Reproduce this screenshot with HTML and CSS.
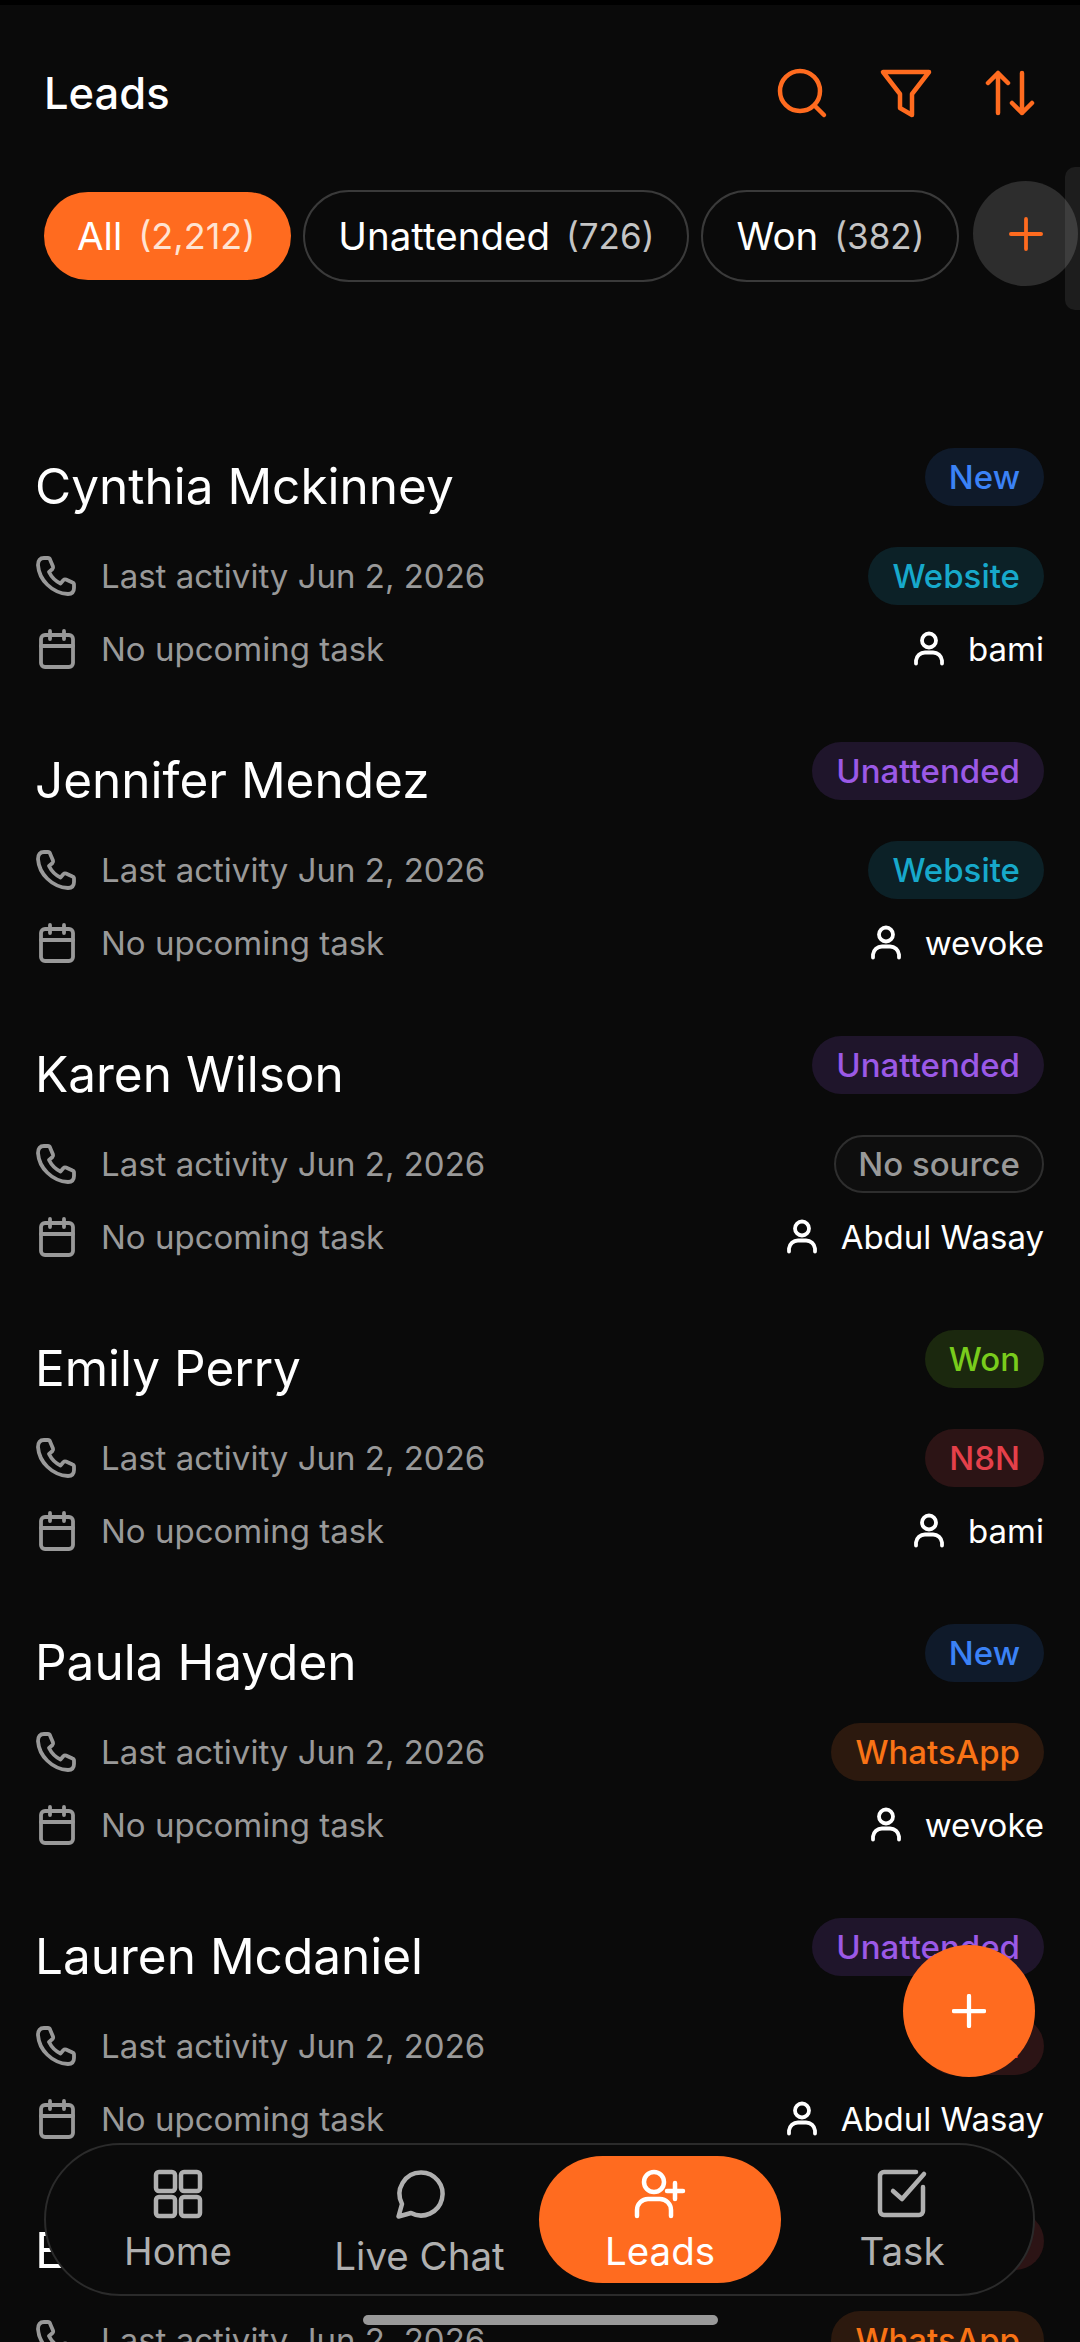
FILE: index.html
```html
<!DOCTYPE html>
<html lang="en">
<head>
    <meta charset="UTF-8">
    <meta name="viewport" content="width=device-width, initial-scale=1.0">
    <title>Leads</title>
    <link rel="stylesheet" href="styles.css">
</head>
<body>
    <svg width="0" height="0" class="defs">
        <symbol id="i-phone" viewBox="0 0 40 40"><path d="M8 2 L12 2 Q13.500 2 14 3.500 L17 10.500 Q17.500 12 16.500 13 L13 16 Q17 24 24.500 27.500 L27.500 24 Q28.500 23 30 23.500 L36.500 26.500 Q38 27 38 28.500 L38 32 Q38 38 32 38 C16 37 3 24 2 9 Q2 2 8 2 Z"/></symbol>
        <symbol id="i-cal" viewBox="0 0 40 40"><rect x="5" y="6" width="32" height="32" rx="4"/><path d="M5 17H37M14 2V10M28 2V10"/></symbol>
        <symbol id="i-user" viewBox="0 0 30 34"><circle cx="15" cy="9" r="7"/><path d="M2 32V29A9 9 0 0 1 11 21H19A9 9 0 0 1 28 29V32"/></symbol>
    </svg>

    <div class="statusbar"></div>

    <header class="topbar">
        <h1>Leads</h1>
        <div class="top-icons">
            <svg viewBox="0 0 48 48"><circle cx="22" cy="22" r="20"/><path d="M37 37L46 46"/></svg>
            <svg viewBox="0 0 48 48"><path d="M1 3H47L30 25V46L18 39V25Z"/></svg>
            <svg viewBox="0 0 48 48"><path d="M12 44V4M2 14L12 4L22 14M36 4V44M26 34L36 44L46 34"/></svg>
        </div>
    </header>

    <nav class="chips">
        <div class="chip active">All <span>(2,212)</span></div>
        <div class="chip">Unattended <span>(726)</span></div>
        <div class="chip">Won <span>(382)</span></div>
    </nav>
    <button class="chip-add"><svg viewBox="0 0 36 36"><path d="M18 2V34M2 18H34"/></svg></button>
    <div class="edge-handle"></div>

    <main class="leads">
        <article class="lead">
            <div class="lead-top"><h2>Cynthia Mckinney</h2><span class="badge blue">New</span></div>
            <div class="lead-row"><p><svg class="ico"><use href="#i-phone"/></svg>Last activity Jun 2, 2026</p><span class="badge cyan">Website</span></div>
            <div class="lead-row"><p><svg class="ico"><use href="#i-cal"/></svg>No upcoming task</p><span class="owner"><svg class="ico-user"><use href="#i-user"/></svg>bami</span></div>
        </article>
        <article class="lead">
            <div class="lead-top"><h2>Jennifer Mendez</h2><span class="badge purple">Unattended</span></div>
            <div class="lead-row"><p><svg class="ico"><use href="#i-phone"/></svg>Last activity Jun 2, 2026</p><span class="badge cyan">Website</span></div>
            <div class="lead-row"><p><svg class="ico"><use href="#i-cal"/></svg>No upcoming task</p><span class="owner"><svg class="ico-user"><use href="#i-user"/></svg>wevoke</span></div>
        </article>
        <article class="lead">
            <div class="lead-top"><h2>Karen Wilson</h2><span class="badge purple">Unattended</span></div>
            <div class="lead-row"><p><svg class="ico"><use href="#i-phone"/></svg>Last activity Jun 2, 2026</p><span class="badge none">No source</span></div>
            <div class="lead-row"><p><svg class="ico"><use href="#i-cal"/></svg>No upcoming task</p><span class="owner"><svg class="ico-user"><use href="#i-user"/></svg>Abdul Wasay</span></div>
        </article>
        <article class="lead">
            <div class="lead-top"><h2>Emily Perry</h2><span class="badge green">Won</span></div>
            <div class="lead-row"><p><svg class="ico"><use href="#i-phone"/></svg>Last activity Jun 2, 2026</p><span class="badge red">N8N</span></div>
            <div class="lead-row"><p><svg class="ico"><use href="#i-cal"/></svg>No upcoming task</p><span class="owner"><svg class="ico-user"><use href="#i-user"/></svg>bami</span></div>
        </article>
        <article class="lead">
            <div class="lead-top"><h2>Paula Hayden</h2><span class="badge blue">New</span></div>
            <div class="lead-row"><p><svg class="ico"><use href="#i-phone"/></svg>Last activity Jun 2, 2026</p><span class="badge orange">WhatsApp</span></div>
            <div class="lead-row"><p><svg class="ico"><use href="#i-cal"/></svg>No upcoming task</p><span class="owner"><svg class="ico-user"><use href="#i-user"/></svg>wevoke</span></div>
        </article>
        <article class="lead">
            <div class="lead-top"><h2>Lauren Mcdaniel</h2><span class="badge purple">Unattended</span></div>
            <div class="lead-row"><p><svg class="ico"><use href="#i-phone"/></svg>Last activity Jun 2, 2026</p><span class="badge red">N8N</span></div>
            <div class="lead-row"><p><svg class="ico"><use href="#i-cal"/></svg>No upcoming task</p><span class="owner"><svg class="ico-user"><use href="#i-user"/></svg>Abdul Wasay</span></div>
        </article>
        <article class="lead">
            <div class="lead-top"><h2>E</h2><span class="badge red">Lost</span></div>
            <div class="lead-row"><p><svg class="ico"><use href="#i-phone"/></svg>Last activity Jun 2, 2026</p><span class="badge orange">WhatsApp</span></div>
        </article>
    </main>

    <button class="fab"><svg viewBox="0 0 36 36"><path d="M18 2V34M2 18H34"/></svg></button>

    <footer class="tabbar">
        <div class="tab">
            <svg viewBox="0 0 48 48"><rect x="2" y="2" width="19" height="19" rx="3"/><rect x="27" y="2" width="19" height="19" rx="3"/><rect x="2" y="27" width="19" height="19" rx="3"/><rect x="27" y="27" width="19" height="19" rx="3"/></svg>
            <span>Home</span>
        </div>
        <div class="tab tab-chat">
            <svg viewBox="0 0 48 48"><path d="M25 2.500A21.500 21.500 0 1 1 15 43L2.500 46.500L6 34A21.500 21.500 0 0 1 25 2.500Z"/></svg>
            <span>Live Chat</span>
        </div>
        <div class="tab current">
            <svg viewBox="0 0 52 48"><circle cx="20" cy="12" r="10"/><path d="M3 46V40A11 11 0 0 1 14 29H26A11 11 0 0 1 37 40V46M33 21H49M41 13V29"/></svg>
            <span>Leads</span>
        </div>
        <div class="tab">
            <svg viewBox="0 0 48 48"><path d="M45 17V41A4 4 0 0 1 41 45H6A4 4 0 0 1 2 41V6A4 4 0 0 1 6 2H38M15 21L24 29L46 4"/></svg>
            <span>Task</span>
        </div>
    </footer>
    <div class="home-bar"></div>
</body>
</html>
```

FILE: styles.css
```css
* {
    box-sizing: border-box;
}

body {
    margin: 0;
    width: 1080px;
    height: 2342px;
    overflow: hidden;
    position: relative;
    background: #0a0a0a;
    color: #fff;
    font-family: Inter, 'Noto Sans', sans-serif;
}

.defs {
    position: absolute;
}

.statusbar {
    height: 5px;
    background: #000;
}

.topbar {
    display: flex;
    justify-content: space-between;
    align-items: center;
    height: 176px;
    padding: 0 46px 0 44px;
}

.topbar h1 {
    margin: 0;
    font-size: 43.5px;
    font-weight: 500;
}

.top-icons {
    display: flex;
    gap: 56px;
}

.top-icons svg {
    width: 48px;
    height: 48px;
    overflow: visible;
    fill: none;
    stroke: #ff6b1f;
    stroke-width: 4.5;
    stroke-linecap: round;
    stroke-linejoin: round;
}

.chips {
    display: flex;
    align-items: center;
    gap: 12px;
    height: 92px;
    margin-top: 9px;
    padding-left: 44px;
}

.chip {
    display: flex;
    align-items: center;
    gap: 16px;
    height: 92px;
    padding: 0 33px;
    border: 2px solid #3a3a3a;
    border-radius: 46px;
    font-size: 38.5px;
    white-space: nowrap;
}

.chip span {
    font-size: 35px;
    color: #c4c4c4;
}

.chip.active {
    height: 88px;
    padding: 0 36px 0 33px;
    border: none;
    background: #ff6b1f;
}

.chip.active span {
    font-size: 36px;
    color: #ffe3d2;
}

.chip-add {
    position: absolute;
    left: 973px;
    top: 181px;
    width: 105px;
    height: 105px;
    padding: 0;
    border: none;
    border-radius: 50%;
    background: #2d2d2d;
}

.chip-add svg {
    display: block;
    width: 34px;
    height: 34px;
    margin: auto;
    fill: none;
    stroke: #ff6b1f;
    stroke-width: 4;
    stroke-linecap: round;
}

.edge-handle {
    position: absolute;
    right: 0;
    top: 167px;
    width: 15px;
    height: 143px;
    background: rgba(255, 255, 255, 0.08);
    border-radius: 10px 0 0 10px;
}

.leads {
    height: 1894px;
    margin-top: 166px;
    overflow: hidden;
}

.lead {
    height: 294px;
    padding: 0 36px;
}

.lead-top {
    display: flex;
    justify-content: space-between;
    align-items: flex-start;
    height: 91px;
}

.lead-top h2 {
    margin: 0 0 0 -1px;
    padding-top: 9px;
    font-size: 49.5px;
    line-height: 58px;
    font-weight: 400;
}

.lead-row {
    display: flex;
    justify-content: space-between;
    align-items: center;
    height: 73px;
}

.lead-row p {
    display: flex;
    align-items: center;
    gap: 25px;
    margin: 0;
    font-size: 33px;
    color: #999;
}

.ico {
    width: 40px;
    height: 40px;
    fill: none;
    stroke: #999;
    stroke-width: 3.8;
    stroke-linejoin: round;
    stroke-linecap: round;
}

.badge {
    display: block;
    height: 58px;
    padding: 0 24px;
    border-radius: 29px;
    font-size: 33px;
    line-height: 58px;
    font-weight: 500;
}

.blue { color: #3b82f6; background: #0f1a2a; }
.cyan { color: #17a9cb; background: #0c2127; }
.purple { color: #9b59e6; background: #1f152b; }
.green { color: #79cc1c; background: #1b280e; }
.red { color: #e5404a; background: #2c1415; }
.orange { color: #f97316; background: #2c190e; }
.none { color: #999; background: #0e0e0e; border: 2px solid #2e2e2e; padding: 0 22px; line-height: 54px; }

.owner {
    display: flex;
    align-items: center;
    gap: 24px;
    font-size: 33px;
}

.ico-user {
    width: 30px;
    height: 35px;
    fill: none;
    stroke: #fff;
    stroke-width: 3.8;
    stroke-linecap: round;
}

.fab {
    position: absolute;
    left: 903px;
    top: 1945px;
    width: 132px;
    height: 132px;
    padding: 0;
    border: none;
    border-radius: 50%;
    background: #ff6b1f;
}

.fab svg {
    display: block;
    width: 34px;
    height: 34px;
    margin: auto;
    fill: none;
    stroke: #fff;
    stroke-width: 4.5;
    stroke-linecap: round;
}

.tabbar {
    position: absolute;
    left: 44px;
    top: 2143px;
    width: 991px;
    height: 153px;
    display: grid;
    grid-template-columns: 250px 236px 242px 242px;
    padding: 11px 0 11px 7px;
    background: #0a0a0a;
    border: 2px solid #2b2b2b;
    border-radius: 77px;
}

.tab {
    display: flex;
    flex-direction: column;
    align-items: center;
    justify-content: flex-start;
    gap: 10px;
    padding-top: 14px;
    border-radius: 64px;
    color: #b0b0b0;
    font-size: 38.5px;
    line-height: 46px;
}

.tab svg {
    width: 48px;
    height: 48px;
    overflow: visible;
    fill: none;
    stroke: #b0b0b0;
    stroke-width: 4.5;
    stroke-linecap: round;
    stroke-linejoin: round;
}

.tab-chat {
    padding-right: 3px;
}

.tab-chat span {
    padding-top: 5px;
}

.tab.current {
    background: #ff6b1f;
    color: #fff;
}

.tab.current svg {
    stroke: #fff;
    width: 52px;
}

.home-bar {
    position: absolute;
    left: 363px;
    top: 2315px;
    width: 355px;
    height: 10px;
    border-radius: 5px;
    background: #999;
}
```
